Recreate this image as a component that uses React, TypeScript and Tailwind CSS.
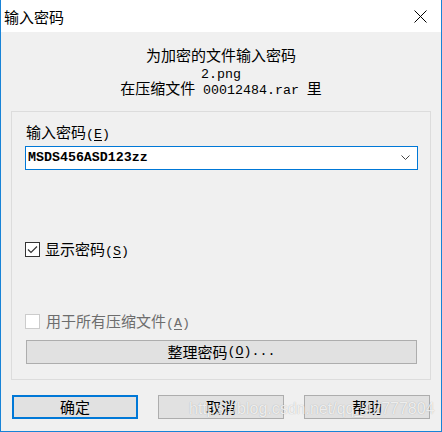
import React from 'react';

const A: React.FC<{ children: React.ReactNode }> = ({ children }) => (
  <span className="font-['Liberation_Mono',monospace] text-[13.3px] leading-none">{children}</span>
);

const Mnemonic: React.FC<{ k: string }> = ({ k }) => (
  <A>
    (<span className="underline underline-offset-2">{k}</span>)
  </A>
);

const Button: React.FC<{ children: React.ReactNode; primary?: boolean; className?: string }> = ({
  children,
  primary,
  className = '',
}) => (
  <button
    className={`h-[24px] bg-[#e1e1e1] flex items-center justify-center leading-[16px] text-black ${
      primary ? 'border-2 border-[#0078d7]' : 'border border-[#adadad]'
    } ${className}`}
  >
    {children}
  </button>
);

export default function App() {
  return (
    <div className="relative w-[442px] h-[432px] bg-[#f0f0f0] border-x border-b border-[#1883d7] font-['Noto_Sans_CJK_SC',sans-serif] text-[15px] text-black overflow-hidden">
      {/* title bar */}
      <div className="h-[32px] bg-white flex items-center justify-between pl-[3px] pr-[14px]">
        <span className="leading-[16px] pt-[2px]">输入密码</span>
        <svg width="13" height="13" viewBox="0 0 13 13">
          <path d="M0.5 0.5 L12.5 12.5 M12.5 0.5 L0.5 12.5" stroke="#000" strokeWidth="1" fill="none" />
        </svg>
      </div>

      <div className="pt-[15px] pl-[10px] pr-[10px]">
        <div className="text-center leading-[16px]">
          <div className="h-[16.5px]">为加密的文件输入密码</div>
          <div className="h-[16.5px]">
            <A>2.png</A>
          </div>
          <div className="h-[16.5px]">
            在压缩文件<A> 00012484.rar </A>里
          </div>
        </div>

        {/* group box */}
        <div className="mt-[14px] w-[420px] border border-[#dcdcdc] pt-[12px] pl-[13px] pr-[12px] pb-[15px]">
          <div className="h-[16px] leading-[16px] pl-[1px]">
            输入密码<Mnemonic k="E" />
          </div>
          <div className="mt-[6px] h-[24px] bg-white border border-[#0078d7] flex items-center justify-between pl-[2px] pr-[7px]">
            <span className="font-['Liberation_Mono',monospace] text-[13.3px] font-bold">MSDS456ASD123zz</span>
            <svg width="9" height="6" viewBox="0 0 9 6">
              <path d="M0.5 0.5 L4.5 4.5 L8.5 0.5" stroke="#444" strokeWidth="1" fill="none" />
            </svg>
          </div>

          <div className="mt-[72px] flex items-center h-[15px]">
            <div className="w-[15px] h-[15px] bg-white border border-[#333] flex items-center justify-center">
              <svg width="13" height="13" viewBox="0 0 13 13">
                <path d="M2 6.5 L5 9.5 L11 3.5" stroke="#333" strokeWidth="1.2" fill="none" />
              </svg>
            </div>
            <span className="ml-[5px] h-[16px] leading-[16px]">
              显示密码<Mnemonic k="S" />
            </span>
          </div>

          <div className="mt-[57px] flex items-center h-[15px] text-[#6d6d6d]">
            <div className="w-[15px] h-[15px] bg-white border border-[#cccccc]" />
            <span className="ml-[6px] h-[16px] leading-[16px]">
              用于所有压缩文件<Mnemonic k="A" />
            </span>
          </div>

          <Button className="mt-[11px] ml-[1px] w-[391px]">
            整理密码<Mnemonic k="O" />
            <A>...</A>
          </Button>
        </div>

        <div className="mt-[15px] ml-[1px] flex gap-[20px]">
          <Button primary className="w-[126px]">确定</Button>
          <Button className="w-[126px]">取消</Button>
          <Button className="w-[126px]">帮助</Button>
        </div>
      </div>

      {/* watermark */}
      <div className="absolute left-[188px] top-[399px] font-['Liberation_Sans',sans-serif] text-[16px] leading-[20px] whitespace-nowrap text-white/80 [text-shadow:0_0_1px_rgba(0,0,0,0.3)] pointer-events-none">
        https://blog.csdn.net/qq_42777804
      </div>
    </div>
  );
}
